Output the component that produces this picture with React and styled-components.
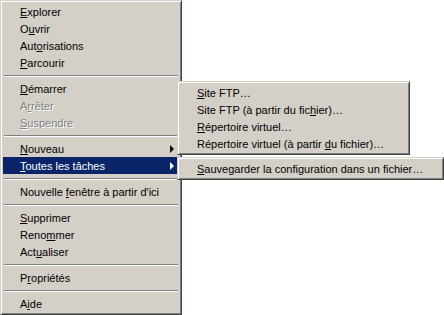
import styled, { createGlobalStyle } from "styled-components";

const Global = createGlobalStyle`
  html, body {
    margin: 0;
    padding: 0;
    background: #ffffff;
  }
  body {
    font-family: Tahoma, "Liberation Sans", Arial, sans-serif;
    font-size: 11px;
  }
`;

const Screen = styled.div`
  position: relative;
  width: 444px;
  height: 315px;
  overflow: hidden;
`;

// classic win2k raised frame
const Menu = styled.div`
  box-sizing: border-box;
  width: ${(p) => p.$w}px;
  background: #d4d0c8;
  border: 1px solid;
  border-color: #d4d0c8 #404040 #404040 #d4d0c8;
  box-shadow: inset 1px 1px 0 #ffffff, inset -1px -1px 0 #808080;
  padding: 2px;
  display: flex;
  flex-direction: column;
`;

const Popup = styled(Menu)`
  position: absolute;
  left: ${(p) => p.$x}px;
  top: ${(p) => p.$y}px;
  z-index: 2;
`;

const Item = styled.div`
  height: 17px;
  display: flex;
  align-items: center;
  padding: 0 5px 0 17px;
  white-space: nowrap;
  color: ${(p) => (p.$active ? "#ffffff" : p.$disabled ? "#808080" : "#000000")};
  background: ${(p) => (p.$active ? "#0a246a" : "transparent")};
  text-shadow: ${(p) => (p.$disabled ? "1px 1px 0 #ffffff" : "none")};
`;

const Label = styled.span`
  flex: 1;
`;

const Key = styled.span`
  text-decoration: underline;
  text-underline-offset: 1px;
`;

const Arrow = styled.span`
  width: 0;
  height: 0;
  border-top: 4px solid transparent;
  border-bottom: 4px solid transparent;
  border-left: 4px solid ${(p) => (p.$active ? "#ffffff" : "#000000")};
`;

const Sep = styled.div`
  height: 9px;
  display: flex;
  align-items: center;
  padding: 0 1px;
  &::after {
    content: "";
    flex: 1;
    border-top: 1px solid #808080;
    border-bottom: 1px solid #ffffff;
  }
`;

// label with one mnemonic letter at index k
const Text = ({ t, k }) => (
  <Label>
    {t.slice(0, k)}
    <Key>{t[k]}</Key>
    {t.slice(k + 1)}
  </Label>
);

const mainItems = [
  { t: "Explorer", k: 0 },
  { t: "Ouvrir", k: 1 },
  { t: "Autorisations", k: 3 },
  { t: "Parcourir", k: 0 },
  "sep",
  { t: "Démarrer", k: 0 },
  { t: "Arrêter", k: 1, disabled: true },
  { t: "Suspendre", k: 0, disabled: true },
  "sep",
  { t: "Nouveau", k: 0, sub: true },
  { t: "Toutes les tâches", k: 0, sub: true, active: true },
  "sep",
  { t: "Nouvelle fenêtre à partir d'ici", k: 9 },
  "sep",
  { t: "Supprimer", k: 0 },
  { t: "Renommer", k: 4 },
  { t: "Actualiser", k: 3 },
  "sep",
  { t: "Propriétés", k: 1 },
  "sep",
  { t: "Aide", k: 1 },
];

const newItems = [
  { t: "Site FTP…", k: 0 },
  { t: "Site FTP (à partir du fichier)…", k: 25 },
  { t: "Répertoire virtuel…", k: 0 },
  { t: "Répertoire virtuel (à partir du fichier)…", k: 29 },
];

const taskItems = [{ t: "Sauvegarder la configuration dans un fichier…", k: 0 }];

function Entries({ list }) {
  return list.map((it, i) =>
    it === "sep" ? (
      <Sep key={i} />
    ) : (
      <Item key={i} $active={it.active} $disabled={it.disabled}>
        <Text t={it.t} k={it.k} />
        {it.sub && <Arrow $active={it.active} />}
      </Item>
    )
  );
}

export default function App() {
  return (
    <Screen>
      <Global />
      <Menu $w={182}>
        <Entries list={mainItems} />
      </Menu>
      <Popup $w={233} $x={177} $y={81}>
        <Entries list={newItems} />
      </Popup>
      <Popup $w={267} $x={177} $y={157}>
        <Entries list={taskItems} />
      </Popup>
    </Screen>
  );
}
